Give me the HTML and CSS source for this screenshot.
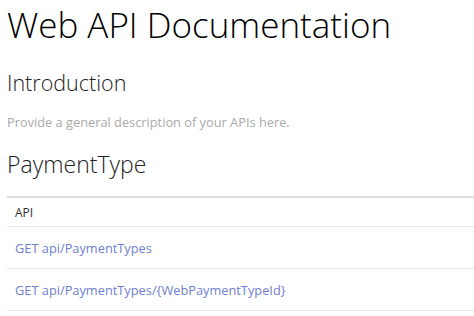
FILE: index.html
```html
<!DOCTYPE html>
<html>
<head>
	<meta charset="UTF-8">
	<title>Web API Documentation</title>
	<link rel="stylesheet" href="styles.css">
</head>
<body>
	<div class="page">
		<h1>Web API Documentation</h1>
		<h2>Introduction</h2>
		<p class="intro">Provide a general description of your APIs here.</p>
		<h2 class="controller">PaymentType</h2>
		<table class="help-list">
			<thead>
				<tr><th>API</th></tr>
			</thead>
			<tbody>
				<tr><td><a href="#">GET api/PaymentTypes</a></td></tr>
				<tr><td><a href="#">GET api/PaymentTypes/{WebPaymentTypeId}</a></td></tr>
			</tbody>
		</table>
	</div>
</body>
</html>
```

FILE: styles.css
```css
body {
    margin: 0;
    background: #fff;
    color: #222;
    font-family: "Open Sans", "Noto Sans", sans-serif;
}
.page {
    padding: 0 0 0 7px;
}
h1 {
    font-size: 35px;
    font-weight: 300;
    line-height: 40px;
    margin: 5px 0 0;
    color: #000;
}
h2 {
    font-size: 21.5px;
    font-weight: 300;
    line-height: 26px;
    margin: 25px 0 0;
    color: #222;
}
.intro {
    font-size: 12.8px;
    color: #aaa;
    margin: 18px 0 0;
    line-height: 16px;
}
h2.controller {
    font-size: 23px;
    line-height: 28px;
    margin-top: 20px;
    color: #222;
}
.help-list {
    width: 100%;
    border-collapse: collapse;
    margin-top: 18px;
}
.help-list th {
    text-align: left;
    font-size: 12px;
    font-weight: 400;
    color: #333;
    padding: 0 8px;
    height: 28px;
    border-top: 2px solid #ddd;
    border-bottom: 1px solid #e6e6e6;
}
.help-list td {
    padding: 0 8px;
    height: 41px;
    font-size: 12.8px;
    border-bottom: 1px solid #e6e6e6;
}
.help-list a {
    color: #7080d0;
    text-decoration: none;
}
```
